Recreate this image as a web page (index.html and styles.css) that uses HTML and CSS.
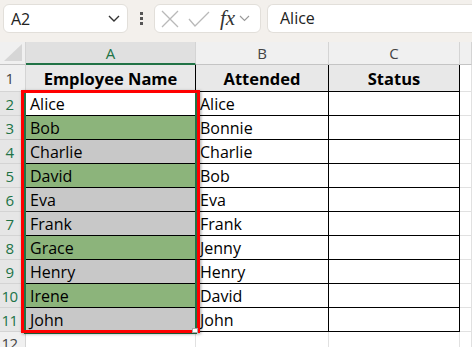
FILE: index.html
```html
<!DOCTYPE html>
<html lang="en">
<head>
    <meta charset="UTF-8">
    <title>Employees</title>
    <link rel="stylesheet" href="styles.css">
</head>
<body>

    <!-- formula bar -->
    <div class="toolbar">
        <div class="namebox">
            <span>A2</span>
            <svg class="chev" width="12" height="7" viewBox="0 0 12 7"><path d="M1 1l5 5 5-5" fill="none" stroke="#333" stroke-width="1.4"/></svg>
        </div>
        <div class="dots"><i></i><i></i><i></i></div>
        <div class="fbuttons">
            <svg width="18" height="18" viewBox="0 0 18 18"><path d="M1 1l16 16M17 1L1 17" stroke="#b9b9b9" stroke-width="1.3"/></svg>
            <svg width="22" height="16" viewBox="0 0 22 16"><path d="M1 8l6 7L21 1" fill="none" stroke="#b9b9b9" stroke-width="1.3"/></svg>
            <span class="fx">fx</span>
            <svg width="11" height="7" viewBox="0 0 11 7"><path d="M1 1l4.5 4.5L10 1" fill="none" stroke="#999" stroke-width="1.1"/></svg>
        </div>
        <div class="fbar">Alice</div>
    </div>

    <!-- sheet -->
    <div class="sheet">
        <div class="grid">
            <div class="corner"><svg width="18" height="17" viewBox="0 0 18 17"><path d="M18 0V17H0Z" fill="#d6d6d6"/></svg></div>
            <div class="colhead sel">A</div>
            <div class="colhead">B</div>
            <div class="colhead">C</div>
            <div class="colhead"></div>

            <div class="rowhead">1</div>
            <div class="cell th">Employee Name</div>
            <div class="cell th">Attended</div>
            <div class="cell th">Status</div>
            <div class="cell"></div>

            <div class="rowhead sel">2</div>
            <div class="cell tb">Alice</div>
            <div class="cell tb">Alice</div>
            <div class="cell tb"></div>
            <div class="cell"></div>

            <div class="rowhead sel">3</div>
            <div class="cell tb green">Bob</div>
            <div class="cell tb">Bonnie</div>
            <div class="cell tb"></div>
            <div class="cell"></div>

            <div class="rowhead sel">4</div>
            <div class="cell tb gray">Charlie</div>
            <div class="cell tb">Charlie</div>
            <div class="cell tb"></div>
            <div class="cell"></div>

            <div class="rowhead sel">5</div>
            <div class="cell tb green">David</div>
            <div class="cell tb">Bob</div>
            <div class="cell tb"></div>
            <div class="cell"></div>

            <div class="rowhead sel">6</div>
            <div class="cell tb gray">Eva</div>
            <div class="cell tb">Eva</div>
            <div class="cell tb"></div>
            <div class="cell"></div>

            <div class="rowhead sel">7</div>
            <div class="cell tb gray">Frank</div>
            <div class="cell tb">Frank</div>
            <div class="cell tb"></div>
            <div class="cell"></div>

            <div class="rowhead sel">8</div>
            <div class="cell tb green">Grace</div>
            <div class="cell tb">Jenny</div>
            <div class="cell tb"></div>
            <div class="cell"></div>

            <div class="rowhead sel">9</div>
            <div class="cell tb gray">Henry</div>
            <div class="cell tb">Henry</div>
            <div class="cell tb"></div>
            <div class="cell"></div>

            <div class="rowhead sel">10</div>
            <div class="cell tb green">Irene</div>
            <div class="cell tb">David</div>
            <div class="cell tb"></div>
            <div class="cell"></div>

            <div class="rowhead sel">11</div>
            <div class="cell tb gray">John</div>
            <div class="cell tb">John</div>
            <div class="cell tb"></div>
            <div class="cell"></div>

            <div class="rowhead last">12</div>
            <div class="cell"></div>
            <div class="cell"></div>
            <div class="cell"></div>
            <div class="cell"></div>
        </div>

        <!-- selection A2:A11 and the red highlight -->
        <div class="selection"></div>
        <div class="highlight"></div>
        <div class="handle"></div>
    </div>

</body>
</html>
```

FILE: styles.css
```css
body {
    margin: 0;
    font-family: "Open Sans", "Liberation Sans", sans-serif;
    background: #fff;
    overflow: hidden;
}
.toolbar {
    height: 42px;
    background-color: #f3f0ec;
    display: flex;
    align-items: flex-start;
    padding: 4px 0 0 3px;
    box-sizing: border-box;
}
.namebox {
    width: 125px;
    height: 29px;
    box-sizing: border-box;
    background: #fff;
    border: 1px solid #e2dfda;
    border-radius: 6px;
    display: flex;
    align-items: center;
    justify-content: space-between;
    padding: 0 7px 0 7px;
    font-size: 16px;
    color: #222;
}
.dots {
    width: 26px;
    height: 29px;
    display: flex;
    flex-direction: column;
    align-items: center;
    justify-content: center;
    gap: 2px;
}
.dots i {
    width: 3px;
    height: 3px;
    background: #555;
}
.fbuttons {
    width: 107px;
    height: 29px;
    box-sizing: border-box;
    background: #fff;
    border: 1px solid #e2dfda;
    border-radius: 6px;
    display: flex;
    align-items: center;
    padding: 0 4px 0 6px;
    gap: 9px;
}
.fbuttons .fx {
    font-family: "Liberation Serif", serif;
    font-style: italic;
    font-size: 21px;
    color: #333;
    margin-left: 1px;
    margin-right: -5px;
    line-height: 1;
}
.fbar {
    flex: 1;
    height: 29px;
    margin-left: 6px;
    box-sizing: border-box;
    background: #fff;
    border: 1px solid #e2dfda;
    border-right: none;
    border-radius: 6px 0 0 6px;
    padding-left: 12px;
    font-size: 16px;
    line-height: 27px;
    color: #222;
}
.sheet {
    position: relative;
}
.grid {
    display: grid;
    grid-template-columns: 26px 170px 133px 131px 1fr;
    grid-template-rows: 23px 27px repeat(10, 24px) 24px;
}
.grid > div {
    box-sizing: border-box;
    border-right: 1px solid #e1e1e1;
    border-bottom: 1px solid #e1e1e1;
    display: flex;
    align-items: center;
    white-space: nowrap;
    overflow: hidden;
}
.corner {
    background: #f0f0f0;
    justify-content: flex-end;
    align-items: flex-end !important;
    padding: 0 3px 3px 0;
    border-right-color: #d4d4d4 !important;
    border-bottom-color: #c4c4c4 !important;
}
.colhead {
    background: #f0f0f0;
    justify-content: center;
    font-size: 15px;
    color: #444;
    border-right-color: #d4d4d4 !important;
    border-bottom-color: #c4c4c4 !important;
}
.colhead.sel {
    background: #e0e0e0;
    color: #217346;
    border-bottom: 2px solid #217346 !important;
}
.rowhead {
    background: #f0f0f0;
    justify-content: center;
    padding-right: 6px;
    font-size: 15px;
    letter-spacing: -0.5px;
    color: #444;
    border-right-color: #d4d4d4 !important;
    border-bottom-color: #d4d4d4 !important;
}
.rowhead.sel {
    background: #e6e6e6;
    color: #217346;
}
.rowhead.last {
    align-items: flex-start !important;
    padding-top: 1px;
}
.cell {
    font-size: 16px;
    color: #000;
    padding-left: 4px;
}
.th {
    background: #e8e8e8;
    font-weight: bold;
    font-size: 16.5px;
    justify-content: center;
    padding-left: 0;
    border-right-color: #000 !important;
    border-bottom-color: #000 !important;
}
.tb {
    border-right-color: #000 !important;
    border-bottom-color: #000 !important;
}
.green {
    background: #8cb47b;
}
.gray {
    background: #c8c8c8;
}
.selection {
    position: absolute;
    left: 24px;
    top: 49px;
    width: 173px;
    height: 243px;
    border: 2px solid #217346;
    box-sizing: border-box;
}
.highlight {
    position: absolute;
    left: 21px;
    top: 48px;
    width: 179px;
    height: 243px;
    border: 3px solid #ff0000;
    box-sizing: border-box;
    box-shadow: 1px 1px 3px rgba(0, 0, 0, 0.35);
}
.handle {
    position: absolute;
    left: 192px;
    top: 286px;
    width: 4px;
    height: 3px;
    background: #fff;
    border: 1px solid #aaa;
}
```
